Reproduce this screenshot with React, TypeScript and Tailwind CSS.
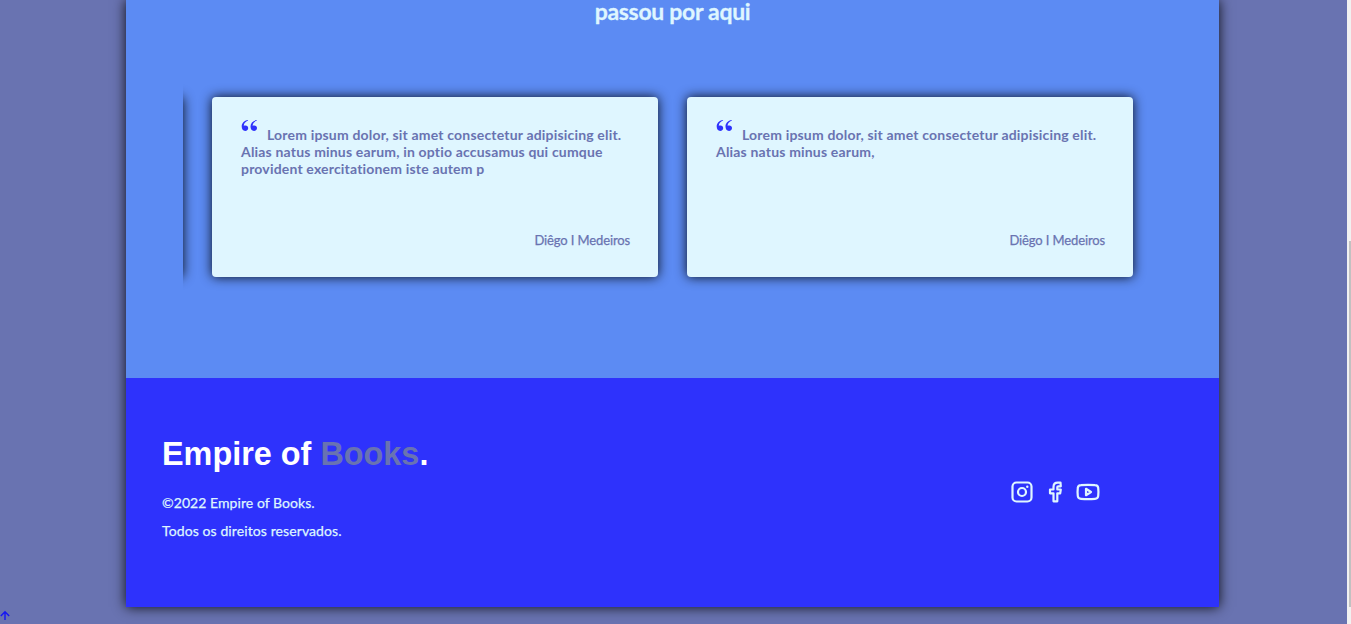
type TestimonialProps = { text: string; author: string };

function Quote() {
  return (
    <svg className="-mt-[10px] mr-[9px] inline-block h-[11px] w-[17px] align-[9px] fill-[#2e32fc]" viewBox="0 0 17 11">
      <path d="M7 0C3 .7.7 3.2.7 6.6.7 9.300 2 11 4.200 11 6 11 7.200 9.800 7.200 8.100 7.200 6.500 6.100 5.400 4.500 5.400 3.800 5.400 3.300 5.500 2.800 5.800 2.900 3.400 4.300 1.600 7.100.5z" />
      <path d="M15.800 0C11.800.7 9.500 3.200 9.500 6.600 9.500 9.300 10.800 11 13 11 14.800 11 16 9.800 16 8.100 16 6.500 14.900 5.400 13.300 5.400 12.600 5.400 12.100 5.500 11.600 5.800 11.700 3.400 13.100 1.600 15.900.5z" />
    </svg>
  );
}

function Testimonial({ text, author }: TestimonialProps) {
  return (
    <blockquote className="flex h-[180px] w-[446px] shrink-0 flex-col justify-between rounded bg-[#dff6ff] px-[29px] pt-[29px] pb-[27px] text-[#6973b1] shadow-[0_0_12px_rgba(0,0,0,0.9)]">
      <p className="text-[14px] leading-[17px] font-bold tracking-[0.18px]">
        <Quote />
        {text}
      </p>
      <cite className="-mr-px block text-right text-[13px] leading-5 tracking-[-0.12px] not-italic [-webkit-text-stroke:0.25px]">{author}</cite>
    </blockquote>
  );
}

function Socials() {
  return (
    <ul className="flex items-center gap-[9px] pr-[83.5px] pb-0.5 text-[#dff6ff]">
      <li>
        <svg className="size-6" viewBox="0 0 24 24" fill="none" stroke="currentColor" strokeWidth="2.200">
          <rect x="2.500" y="2.500" width="19" height="19" rx="4" />
          <circle cx="12" cy="12" r="4" />
          <circle cx="17.300" cy="6.800" r="1.200" fill="currentColor" stroke="none" />
        </svg>
      </li>
      <li>
        <svg className="size-6" viewBox="0 0 24 24" fill="none" stroke="currentColor" strokeWidth="2.200" strokeLinejoin="round">
          <path d="M17.500 2.700h-2.700c-2.700 0-4.300 1.700-4.300 4.300v2.500H7v3.800h3.500v8h3.800v-8h2.900l.6-3.800h-3.500V7.300c0-.6.4-1 1-1h2.500z" />
        </svg>
      </li>
      <li>
        <svg className="size-6" viewBox="0 0 24 24" fill="none" stroke="currentColor" strokeWidth="2.200" strokeLinejoin="round">
          <path d="M5 5.200Q12 4.600 19 5.200Q22 5.300 22.200 8Q22.700 12 22.200 16Q22 18.700 19 18.800Q12 19.400 5 18.800Q2 18.700 1.800 16Q1.300 12 1.800 8Q2 5.300 5 5.200Z" />
          <path d="m10 8.800 5 3.200-5 3.200z" />
        </svg>
      </li>
    </ul>
  );
}

export default function App() {
  return (
    <div className="flex h-[624px] overflow-hidden bg-[#6973b1] font-['Lato',sans-serif]">
      <div className="relative min-w-0 flex-1">
        <main className="ml-[126px] h-[607px] w-[1093px] shadow-[0_0_12px_rgba(0,0,0,0.9)]">
          <section className="h-[378px] bg-[#5c8bf3]">
            <h2 className="h-[77px] text-center text-[23px] leading-[23px] font-bold tracking-[-0.3px] text-[#dff6ff] [-webkit-text-stroke:0.3px]">
              passou por aqui
            </h2>
            <div className="ml-[57px] flex w-[979px] gap-[29px] overflow-hidden py-5">
              <div className="-ml-[446px] h-[180px] w-[446px] shrink-0 rounded bg-[#dff6ff] shadow-[0_0_12px_rgba(0,0,0,0.9)]" />
              <Testimonial
                text="Lorem ipsum dolor, sit amet consectetur adipisicing elit. Alias natus minus earum, in optio accusamus qui cumque provident exercitationem iste autem p"
                author="Diêgo I Medeiros"
              />
              <Testimonial
                text="Lorem ipsum dolor, sit amet consectetur adipisicing elit. Alias natus minus earum,"
                author="Diêgo I Medeiros"
              />
            </div>
          </section>
          <footer className="flex h-[229px] items-center justify-between bg-[#2e32fc] px-9 text-[#dff6ff]">
            <div className="pb-[5px]">
              <h3 className="mb-4 font-['Liberation_Sans',sans-serif] text-[32.4px] leading-[38px] font-bold text-white">
                Empire of <span className="text-[#6973b1]">Books</span>.
              </h3>
              <p className="text-[14px] leading-7 tracking-[0.06px] [-webkit-text-stroke:0.25px]">©2022 Empire of Books.</p>
              <p className="text-[14px] leading-7 tracking-[0.1px] [-webkit-text-stroke:0.25px]">Todos os direitos reservados.</p>
            </div>
            <Socials />
          </footer>
        </main>
        <a href="#top" aria-label="Topo" className="absolute bottom-[3px] left-0 text-[#1414f5]">
          <svg className="h-[11px] w-[10px]" viewBox="0 0 10 11" fill="none" stroke="currentColor" strokeWidth="1.400">
            <path d="M5 10V2M.8 6 5 1.800 9.200 6" />
          </svg>
        </a>
      </div>
      <div className="h-full w-1 bg-[#f1f1f1] pl-0.5">
        <div className="mt-[241px] h-[366px] w-0.5 bg-[#c1c1c1]" />
      </div>
    </div>
  );
}
